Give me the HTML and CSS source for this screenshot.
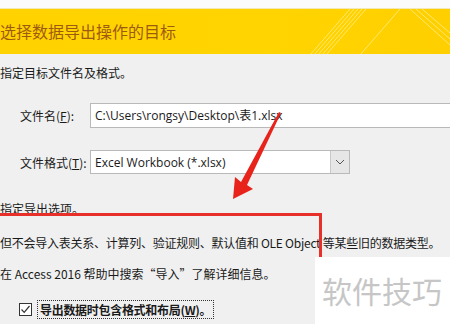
FILE: index.html
```html
<!DOCTYPE html>
<html lang="zh-CN">
<head>
    <meta charset="UTF-8">
    <meta name="viewport" content="width=device-width, initial-scale=1.0">
    <title>导出 - Excel 电子表格</title>
    <link rel="stylesheet" href="styles.css">
</head>
<body>
    <div class="top-strip"></div>
    <header class="banner">
        <h1>选择数据导出操作的目标</h1>
        <svg class="stripes" width="200" height="46" viewBox="0 0 200 46">
            <g stroke="#fff3a0" stroke-width="1" opacity="0.7">
                <line x1="60" y1="46" x2="100" y2="0"/>
                <line x1="64" y1="46" x2="104" y2="0"/>
                <line x1="68" y1="46" x2="108" y2="0"/>
                <line x1="72" y1="46" x2="112" y2="0"/>
                <line x1="76" y1="46" x2="116" y2="0"/>
                <line x1="110" y1="46" x2="150" y2="0"/>
                <line x1="160" y1="0" x2="200" y2="36"/>
                <line x1="166" y1="0" x2="200" y2="30"/>
                <line x1="172" y1="0" x2="200" y2="24"/>
            </g>
        </svg>
    </header>

    <main class="content">
        <p class="line first">指定目标文件名及格式。</p>

        <div class="field">
            <label>文件名(<u>F</u>):</label>
            <div class="input">C:\Users\rongsy\Desktop\表1.xlsx</div>
        </div>

        <div class="field second">
            <label>文件格式(<u>T</u>):</label>
            <div class="select">
                <span class="value">Excel Workbook (*.xlsx)</span>
                <span class="drop">
                    <svg width="10" height="6" viewBox="0 0 10 6"><path d="M1 1 L5 5 L9 1" fill="none" stroke="#555" stroke-width="1"/></svg>
                </span>
            </div>
        </div>

        <p class="line options">指定导出选项。</p>
        <p class="line note1">但不会导入表关系、计算列、验证规则、默认值和 OLE Object 等某些旧的数据类型。</p>
        <p class="line note2">在 Access 2016 帮助中搜索“导入”了解详细信息。</p>

        <div class="check">
            <span class="box">
                <svg width="11" height="11" viewBox="0 0 11 11"><path d="M1.5 5.5 L4.2 8.3 L9.5 2" fill="none" stroke="#333" stroke-width="1.2"/></svg>
            </span>
            <span class="check-label">导出数据时包含格式和布局(<u>W</u>)。</span>
        </div>
    </main>

    <div class="red-frame"></div>
    <svg class="arrow" width="450" height="324" viewBox="0 0 450 324">
        <polygon fill="#e8231b" points="281,113 247,185 253,189 233,199 235,177 241,182 279,112"/>
    </svg>
    <div class="watermark">软件技巧</div>
</body>
</html>
```

FILE: styles.css
```css
body { margin: 0; width: 450px; height: 324px; overflow: hidden; position: relative; background: #f0f0f0; font-family: "Noto Sans CJK SC", "Open Sans", sans-serif; font-size: 12px; color: #1a1a1a; }
.top-strip { height: 8px; background: #fbfbfb; border-bottom: 1px solid #f3e9b8; }
.banner { height: 45px; position: relative; overflow: hidden; background: linear-gradient(90deg, #ffd200 0%, #ffd400 60%, #ffcf00 100%); }
.banner h1 { margin: 0; font-size: 16px; font-weight: normal; line-height: 45px; color: #9e5a0f; }
.stripes { position: absolute; right: 0; top: 0; }
.content { padding: 0; }
.line { margin: 0; line-height: 18px; white-space: nowrap; }
.first { margin-top: 10px; }
.field { display: flex; align-items: center; margin-top: 21px; height: 25px; }
.field.second { margin-top: 22px; height: 24px; }
.field label { width: 70px; padding-left: 20px; font-size: 12px; white-space: nowrap; }
.input { flex: 1; height: 23px; border: 1px solid #b9b9b9; border-right: none; background: #fff; padding-left: 4px; line-height: 23px; font-family: "Open Sans", "Noto Sans CJK SC", sans-serif; font-size: 12px; white-space: nowrap; }
.select { width: 258px; height: 22px; border: 1px solid #b9b9b9; background: #fff; display: flex; align-items: center; }
.select .value { flex: 1; padding-left: 4px; font-family: "Open Sans", sans-serif; font-size: 12px; }
.drop { width: 18px; height: 22px; background: #e6e6e6; border-left: 1px solid #c8c8c8; display: flex; align-items: center; justify-content: center; }
.options { margin-top: 26px; }
.note1 { margin-top: 16px; letter-spacing: -0.25px; }
.note2 { margin-top: 13px; }
.check { display: flex; align-items: center; margin-top: 17px; padding-left: 19px; height: 19px; }
.box { width: 11px; height: 11px; border: 1px solid #333; background: #fff; display: flex; }
.check-label { margin-left: 5px; padding: 0 2px; border: 1px dotted #333; line-height: 17px; font-weight: bold; letter-spacing: -0.3px; }
.red-frame { position: absolute; left: 0; top: 213px; width: 319px; height: 108px; border-top: 3px solid #e8302a; border-right: 3px solid #e8302a; }
.arrow { position: absolute; left: 0; top: 0; }
.watermark { position: absolute; left: 315px; top: 257px; width: 135px; height: 67px; background: #fff; color: #c6c6c6; font-size: 30px; line-height: 67px; padding-left: 7px; box-sizing: border-box; }
```
